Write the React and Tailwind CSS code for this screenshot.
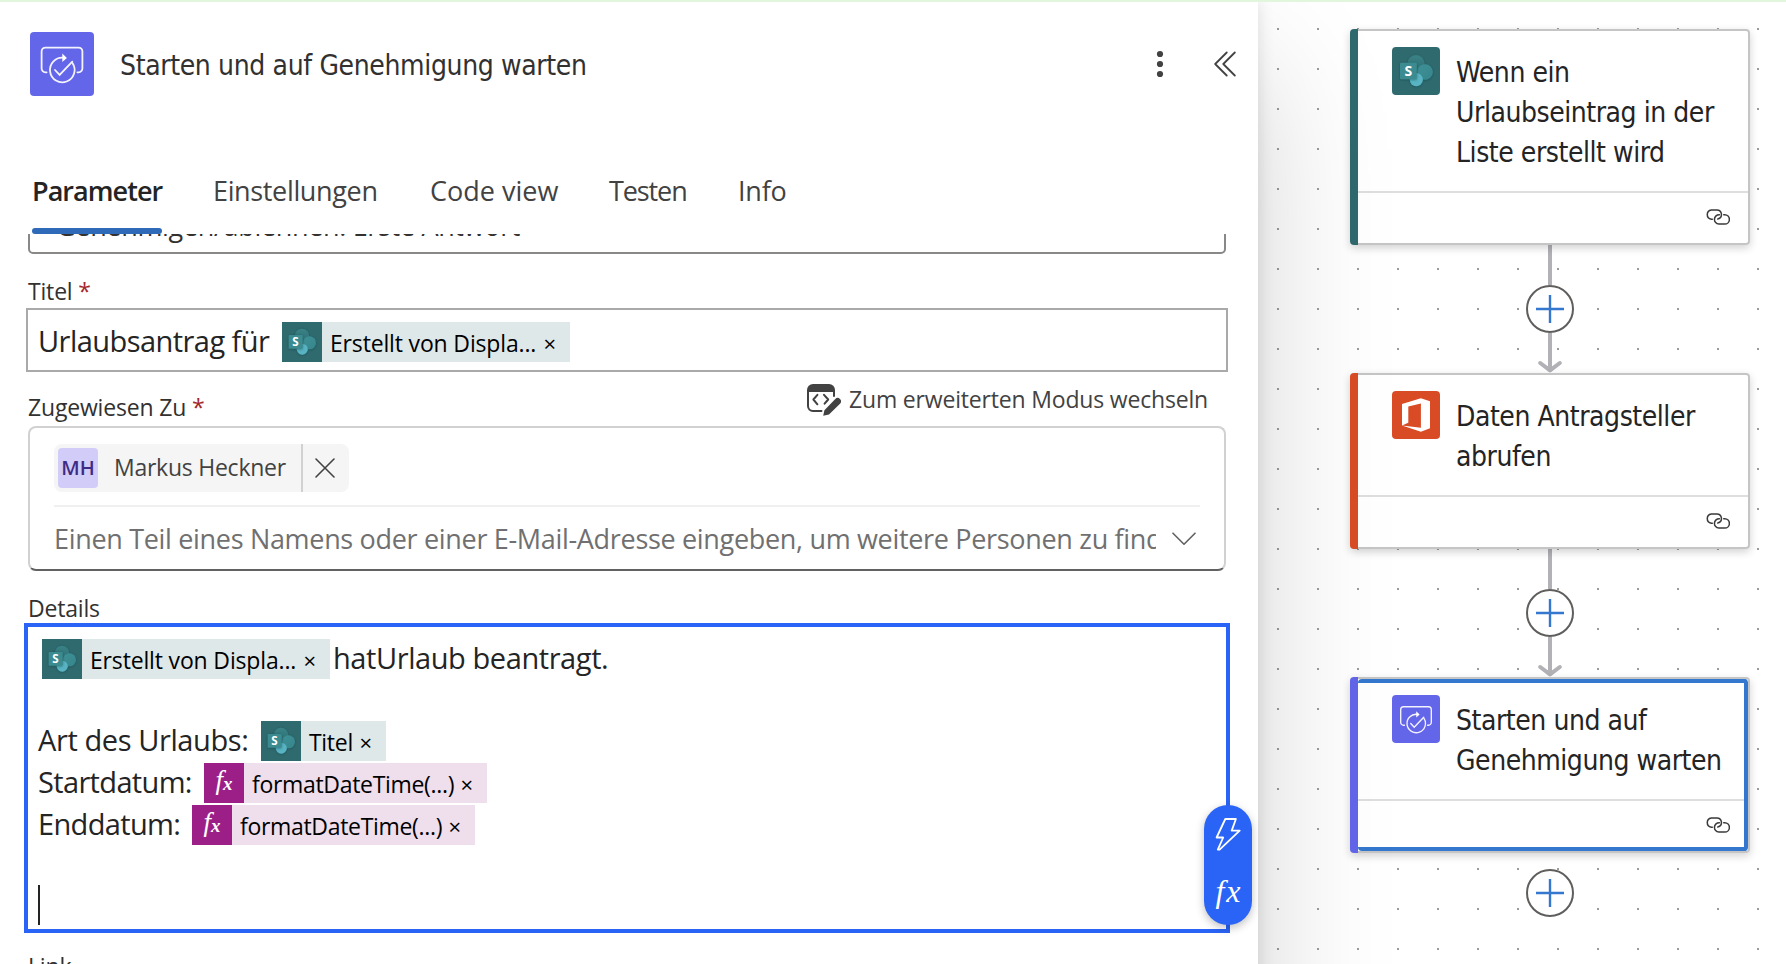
import React from "react";

function SharePointIcon({ className }) {
  return (
    <svg viewBox="0 0 48 48" className={className}>
      <defs>
        <linearGradient id="spTop" x1="0" y1="0" x2="0" y2="1">
          <stop offset="0" stopColor="#3a8286" />
          <stop offset="1" stopColor="#2c6f74" />
        </linearGradient>
        <linearGradient id="spRight" x1="0" y1="0" x2="1" y2="1">
          <stop offset="0" stopColor="#3d9097" />
          <stop offset="1" stopColor="#37868c" />
        </linearGradient>
        <filter id="spShadow" x="-50%" y="-50%" width="200%" height="200%">
          <feDropShadow dx="0" dy="0.6" stdDeviation="1" floodColor="#0d3c40" floodOpacity="0.55" />
        </filter>
      </defs>
      <rect width="48" height="48" fill="#2f6a6f" />
      <g filter="url(#spShadow)">
        <circle cx="24" cy="16.6" r="8.6" fill="url(#spTop)" />
        <circle cx="33" cy="25" r="7.8" fill="url(#spRight)" />
        <circle cx="24.3" cy="32.6" r="6.6" fill="#58b3c3" />
      </g>
      <rect x="8" y="15.7" width="16.8" height="16.5" rx="1" fill="#3a8b90" filter="url(#spShadow)" />
      <text x="16.3" y="28.7" textAnchor="middle" fontFamily="Open Sans, sans-serif" fontWeight="700" fontSize="14" fill="#fff">
        S
      </text>
    </svg>
  );
}

function ApprovalIcon({ className }) {
  return (
    <svg viewBox="0 0 64 64" className={className} fill="none" stroke="#fff" strokeLinecap="round" strokeLinejoin="round">
      <rect width="64" height="64" fill="#6466ea" stroke="none" />
      <g strokeWidth="1.8" strokeOpacity="0.92">
        <path d="M16.6 40.3h-1.2a3.8 3.8 0 0 1-3.8-3.8V19.4a3.8 3.8 0 0 1 3.8-3.8h33.2a3.8 3.8 0 0 1 3.8 3.8v17.1a3.8 3.8 0 0 1-3.8 3.8h-1.2" />
        <path d="M33.5 25.7A12.3 12.3 0 1 0 42.6 31.2" />
        <path d="M25 38l4.6 4.9L42.3 29.6" strokeLinejoin="miter" />
      </g>
      <path d="M32.3 21.6l4.6 4.3-4.6 4.1z" fill="#fff" stroke="none" />
    </svg>
  );
}

function OfficeIcon({ className }) {
  return (
    <svg viewBox="0 0 48 48" className={className}>
      <rect width="48" height="48" fill="#d94b25" />
      <path d="M10 34.4V12.9L28.9 7.2 38 10.3v27L28.9 40.8 10 34.4l18.9 2.4V12.4l-12.6 3v16.4z" fill="#fff" />
    </svg>
  );
}

function LinkIcon() {
  return (
    <svg viewBox="0 0 24 16" className="h-4 w-6" fill="none" stroke="#3b3a39" strokeWidth="1.5" strokeLinecap="round">
      <path d="M6.3 10.2H5.3A4.7 4.7 0 0 1 5.3 0.9H10.9a4.6 4.6 0 0 1 .9 9.1" />
      <path d="M13.4 5.7A4.7 4.7 0 0 0 12.9 15.1h5.8a4.7 4.7 0 0 0 0-9.4h-1" />
    </svg>
  );
}

function CodeEditIcon() {
  return (
    <svg viewBox="0 0 34 32" className="h-8 w-[34px]" fill="none" stroke="#424242" strokeLinecap="round" strokeLinejoin="round">
      <path d="M0 8V6a6 6 0 0 1 6-6h16a6 6 0 0 1 6 6v2z" fill="#424242" stroke="none" />
      <path d="M1 7v15a5 5 0 0 0 5 5h8.5M27 7v5" strokeWidth="2" />
      <path d="M10.4 10.8L6.4 15.5l4 4.8M17 10.8l4.2 4.7-3.6 4.2" strokeWidth="2" />
      <path d="M16.2 31.8l1.2-5.6L28.3 15a3.3 3.3 0 0 1 4.7 4.7L22 30.6z" fill="#424242" stroke="none" />
    </svg>
  );
}

function Token({ kind, label, width, tracking }) {
  const fx = kind === "fx";
  return (
    <span className={`mt-px flex h-10 shrink-0 ${width} ${fx ? "bg-[#efdeeb]" : "bg-[#dfe8e9]"}`}>
      {fx ? (
        <span className="flex h-10 w-10 shrink-0 items-start justify-center bg-[#9c1f87] font-['Liberation_Serif',serif] text-[27px] leading-[35px] text-white italic">
          <span>f</span>
          <span className="pt-[3px] text-[19px] font-bold">x</span>
        </span>
      ) : (
        <SharePointIcon className="h-10 w-10 shrink-0" />
      )}
      <span className="flex flex-1 justify-between pr-3.5 pl-2 text-[23px] leading-[42px] whitespace-nowrap text-black">
        <span className={tracking}>{label}</span>
        <span className="text-[22px]">×</span>
      </span>
    </span>
  );
}

function Tab({ label, className, active }) {
  return (
    <div className={`flex h-[62px] flex-col justify-between whitespace-nowrap ${className}`}>
      <span className={`text-[27px] leading-[38px] ${active ? "font-semibold text-[#242424]" : "text-[#424242]"}`}>{label}</span>
      {active && <span className="h-1.5 w-[130px] rounded-full bg-[#2f6ab8]" />}
    </div>
  );
}

function Card({ stripe, icon, lines, bodyHeight, selected }) {
  return (
    <div className="relative flex w-[400px] rounded-[4px] bg-white shadow-[0_3px_8px_rgba(0,0,0,0.18)]">
      <div className={`w-2 shrink-0 rounded-l-[4px] ${stripe}`} />
      <div className="flex flex-1 flex-col rounded-r-[4px] border-y-2 border-r-2 border-[#c5c5c5]">
        <div className={`flex border-b-2 border-[#dedede] pt-4 pl-[34px] ${bodyHeight}`}>
          {icon}
          <div className="mt-1.5 ml-4 font-['DejaVu_Sans_Condensed','DejaVu_Sans',sans-serif] text-[28px] leading-10 tracking-[-0.45px] whitespace-nowrap text-[#242424]">
            {lines.map((line) => (
              <div key={line}>{line}</div>
            ))}
          </div>
        </div>
        <div className="flex h-[50px] justify-end pt-4 pr-[18px]">
          <LinkIcon />
        </div>
      </div>
      {selected && <div className="absolute top-0.5 right-0.5 bottom-0.5 left-2 rounded-[4px] border-y-4 border-r-4 border-[#3477ce]" />}
    </div>
  );
}

function AddButton() {
  return (
    <div className="flex h-12 w-12 items-center justify-center rounded-full border-2 border-[#605e5c] bg-white">
      <svg viewBox="0 0 28 28" className="h-7 w-7" stroke="#3477ce" strokeWidth="2.4">
        <path d="M14 0v28M0 14h28" />
      </svg>
    </div>
  );
}

function Connector() {
  return (
    <div className="flex w-[400px] flex-col items-center">
      <div className="h-10 w-1 bg-[#b1b1b6]" />
      <AddButton />
      <svg viewBox="0 0 24 40" className="h-10 w-6" fill="none" stroke="#b1b1b6" strokeWidth="4" strokeLinecap="round" strokeLinejoin="round">
        <path d="M12 0v36" strokeLinecap="butt" />
        <path d="M2.2 30L12 37.4 21.8 30" />
      </svg>
    </div>
  );
}

function Label({ children, required, className = "" }) {
  return (
    <div className={`pl-7 text-[23px] leading-8 tracking-[-0.18px] text-[#323130] ${className}`}>
      {children}
      {required && <span className="text-[#a4262c]"> *</span>}
    </div>
  );
}

export default function App() {
  return (
    <div className="flex h-[964px] w-[1786px] overflow-hidden border-t-2 border-[#e2f5dd] bg-white font-['Open_Sans',sans-serif]">
      <section className="relative z-10 h-[1200px] w-[1258px] shrink-0 bg-white shadow-[0_0_16px_rgba(0,0,0,0.12),0_64px_128px_rgba(0,0,0,0.18)]">
        <header className="flex h-[170px] items-start pt-[30px] pl-[30px]">
          <ApprovalIcon className="h-16 w-16 rounded-[4px]" />
          <h1 className="mt-px ml-[26px] flex-1 font-['DejaVu_Sans_Condensed','DejaVu_Sans',sans-serif] text-[28px] leading-[66px] tracking-[-0.36px] text-[#323130]">
            Starten und auf Genehmigung warten
          </h1>
          <svg viewBox="0 0 8 28" className="mt-[18px] h-7 w-2" fill="#424242">
            <circle cx="4" cy="4" r="3.1" />
            <circle cx="4" cy="14" r="3.1" />
            <circle cx="4" cy="24" r="3.1" />
          </svg>
          <svg viewBox="0 0 22 26" className="mt-[19px] mr-[22px] ml-[50px] h-[26px] w-[22px]" fill="none" stroke="#424242" strokeWidth="1.8" strokeLinecap="round" strokeLinejoin="round">
            <path d="M12.7 1.5L1.2 13l11.5 11.5M20.8 1.5L9.3 13l11.5 11.5" />
          </svg>
        </header>

        <nav className="relative z-10 flex gap-[50px] pl-8">
          <Tab label="Parameter" className="w-[131px] tracking-[-0.95px]" active />
          <Tab label="Einstellungen" className="w-[167px] tracking-[-0.35px]" />
          <Tab label="Code view" className="w-[129px]" />
          <Tab label="Testen" className="w-[79px] tracking-[-1.1px]" />
          <Tab label="Info" className="w-[50px] tracking-[-0.2px]" />
        </nav>

        <div className="mr-8 ml-7 h-5 overflow-hidden">
          <div className="-mt-10 h-[60px] rounded-[5px] border-2 border-[#8a8886] pt-3 pl-[26px] text-[27px] leading-9 tracking-[-0.33px] whitespace-nowrap text-[#323130]">
            Genehmigen/ablehnen: Erste Antwort
          </div>
        </div>

        <Label required className="mt-[21px] h-[33px]">
          Titel
        </Label>
        <div className="ml-[26px] flex h-16 w-[1202px] border-2 border-[#a9a9a9] pt-[11px] pl-2.5 text-[29px] leading-10 text-[#242424]">
          <span className="w-[244px] shrink-0 tracking-[-0.55px] whitespace-nowrap">Urlaubsantrag für</span>
          <Token kind="sp" label="Erstellt von Displa..." width="w-[288px]" tracking="tracking-[-0.16px]" />
        </div>

        <div className="flex h-[54px] justify-between">
          <Label required className="pt-[19px]">
            Zugewiesen Zu
          </Label>
          <div className="mr-[50px] flex gap-2 pt-3 text-[23px] leading-[30px] tracking-[-0.18px] text-[#424242]">
            <CodeEditIcon />
            Zum erweiterten Modus wechseln
          </div>
        </div>

        <div className="mr-8 ml-7 h-[145px] rounded-[8px] border-2 border-[#d1d1d1] border-b-[#616161] px-6 pt-4">
          <div className="flex h-12 w-[295px] items-center rounded-[8px] bg-[#f5f5f5] pl-1">
            <span className="flex h-10 w-10 items-center justify-center rounded-[4px] bg-[#d2ccf8] text-[20px] font-semibold text-[#3f2b84]">MH</span>
            <span className="ml-4 w-[187px] pb-0.5 text-[23px] leading-[46px] tracking-[-0.25px] whitespace-nowrap text-[#424242]">Markus Heckner</span>
            <span className="h-full w-0.5 bg-[#d1d1d1]" />
            <svg viewBox="0 0 20 20" className="ml-3 h-5 w-5" stroke="#424242" strokeWidth="1.6" strokeLinecap="round">
              <path d="M1 1l18 18M19 1L1 19" />
            </svg>
          </div>
          <div className="mt-[13px] flex h-[60px] items-start border-t-2 border-[#f0f0f0]">
            <div className="mt-3 w-[1102px] overflow-hidden text-[27px] leading-10 tracking-[-0.32px] whitespace-nowrap text-[#707070]">
              Einen Teil eines Namens oder einer E-Mail-Adresse eingeben, um weitere Personen zu finden
            </div>
            <svg viewBox="0 0 24 14" className="mt-[25px] ml-4 h-[14px] w-6 shrink-0" fill="none" stroke="#616161" strokeWidth="1.6" strokeLinecap="round" strokeLinejoin="round">
              <path d="M1 1.2l11 11 11-11" />
            </svg>
          </div>
        </div>

        <Label className="mt-[21px] h-[31px]">Details</Label>
        <div className="relative ml-6 h-[310px] w-[1206px] border-4 border-[#2a64f6] pt-[11px] pl-2.5 text-[29px] leading-10 whitespace-nowrap text-[#242424]">
          <div className="flex h-[42px] pl-1">
            <Token kind="sp" label="Erstellt von Displa..." width="w-[288px]" tracking="tracking-[-0.16px]" />
            <span className="ml-[3px] tracking-[-0.42px]">hatUrlaub beantragt.</span>
          </div>
          <div className="h-10" />
          <div className="flex h-[42px]">
            <span className="w-[223px] tracking-[-0.4px]">Art des Urlaubs:</span>
            <Token kind="sp" label="Titel" width="w-[125px]" tracking="tracking-[-0.3px]" />
          </div>
          <div className="flex h-[42px]">
            <span className="w-[166px] tracking-[-0.65px]">Startdatum:</span>
            <Token kind="fx" label="formatDateTime(...)" width="w-[283px]" tracking="tracking-[-0.32px]" />
          </div>
          <div className="flex h-[42px]">
            <span className="w-[154px] tracking-[-0.65px]">Enddatum:</span>
            <Token kind="fx" label="formatDateTime(...)" width="w-[283px]" tracking="tracking-[-0.32px]" />
          </div>
          <div className="h-[39px]" />
          <div className="h-10 w-0.5 bg-[#242424]" />

          <div className="absolute top-[178px] -right-[26px] flex h-[120px] w-12 flex-col items-center rounded-full bg-[#2a64f6] pt-3 shadow-[0_3px_8px_rgba(0,0,0,0.25)]">
            <svg viewBox="0 0 26 34" className="h-[34px] w-[26px]" fill="none" stroke="#fff" strokeWidth="1.8" strokeLinejoin="round">
              <path d="M10.3 2h10.6l-4.2 11.6h8L4.6 32.6H2.8L8.2 20.5H1.6z" />
            </svg>
            <span className="mt-5 pl-0.5 font-['Liberation_Serif',serif] text-[32px] leading-10 tracking-[2px] text-white italic">fx</span>
          </div>
        </div>
        <Label className="mt-[17px]">Link</Label>
      </section>

      <main className="flex h-full flex-1 flex-col bg-[conic-gradient(at_2px_2px,transparent_75%,#9b9b9b_0)] bg-[length:40px_40px] bg-[position:19px_26px] pt-[27px] pl-[92px]">
        <Card
          stripe="bg-[#2f6a6f]"
          icon={<SharePointIcon className="h-12 w-12 shrink-0 rounded-[4px]" />}
          lines={["Wenn ein", "Urlaubseintrag in der", "Liste erstellt wird"]}
          bodyHeight="h-[162px]"
        />
        <Connector />
        <Card
          stripe="bg-[#d94b25]"
          icon={<OfficeIcon className="h-12 w-12 shrink-0 rounded-[4px]" />}
          lines={["Daten Antragsteller", "abrufen"]}
          bodyHeight="h-[122px]"
        />
        <Connector />
        <Card
          stripe="bg-[#6466ea]"
          icon={<ApprovalIcon className="h-12 w-12 shrink-0 rounded-[4px]" />}
          lines={["Starten und auf", "Genehmigung warten"]}
          bodyHeight="h-[122px]"
          selected
        />
        <div className="mt-4 flex w-[400px] justify-center">
          <AddButton />
        </div>
      </main>
    </div>
  );
}
